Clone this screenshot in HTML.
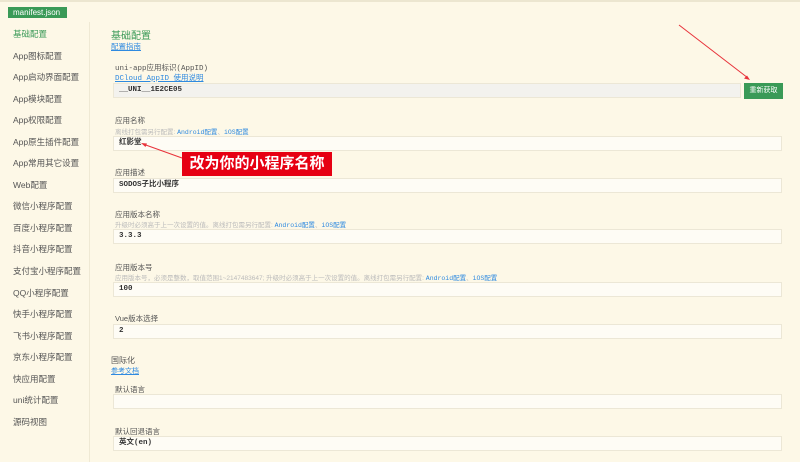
<!DOCTYPE html>
<html><head><meta charset="utf-8"><style>
*{margin:0;padding:0;box-sizing:border-box}
body{width:800px;height:462px;overflow:hidden;background:#fdf8e7;font-family:"Liberation Sans","Noto Sans CJK SC",sans-serif;position:relative;color:#333}
.a{position:absolute;white-space:nowrap}
.topline{position:absolute;left:0;top:0;width:800px;height:2px;background:#ece6d0}
.tab{left:8px;top:7px;width:59px;height:11px;background:#3a9a57;color:#fff;font-size:8px;line-height:11px;padding-left:5px}
.side{position:absolute;left:89px;top:22px;width:1px;height:440px;background:#efe9d4}
.si{left:13px;font-size:8.5px;color:#555}
.lab{left:115px;font-size:7.5px;color:#555}
.hint{left:115px;font-size:6.5px;color:#bbb}
.hint b{color:#2f8ae0;font-weight:normal;font-family:"Liberation Mono","Noto Sans CJK SC",monospace}
.inp{left:113px;width:669px;height:15px;background:#fefcf5;border:1px solid #ece7d6;font-size:7.5px;padding-left:5px;line-height:13px;font-family:"Liberation Mono","Noto Sans CJK SC",monospace;font-weight:bold;color:#333}
.lnk{color:#2f8ae0;font-size:7.5px}
</style></head><body>
<div class="topline"></div>
<div class="a tab">manifest.json</div>
<div class="side"></div>
<div class="a si" style="top:28px;color:#3a9a57">基础配置</div>
<div class="a si" style="top:50px">App图标配置</div>
<div class="a si" style="top:71px">App启动界面配置</div>
<div class="a si" style="top:93px">App模块配置</div>
<div class="a si" style="top:114px">App权限配置</div>
<div class="a si" style="top:136px">App原生插件配置</div>
<div class="a si" style="top:157px">App常用其它设置</div>
<div class="a si" style="top:179px">Web配置</div>
<div class="a si" style="top:200px">微信小程序配置</div>
<div class="a si" style="top:222px">百度小程序配置</div>
<div class="a si" style="top:243px">抖音小程序配置</div>
<div class="a si" style="top:265px">支付宝小程序配置</div>
<div class="a si" style="top:287px">QQ小程序配置</div>
<div class="a si" style="top:308px">快手小程序配置</div>
<div class="a si" style="top:330px">飞书小程序配置</div>
<div class="a si" style="top:351px">京东小程序配置</div>
<div class="a si" style="top:373px">快应用配置</div>
<div class="a si" style="top:394px">uni统计配置</div>
<div class="a si" style="top:416px">源码视图</div>

<div class="a" style="left:111px;top:27px;font-size:10px;color:#3a9a57">基础配置</div>
<div class="a lnk" style="left:111px;top:41px;text-decoration:underline">配置指南</div>

<div class="a lab" style="top:62px;font-family:'Liberation Mono','Noto Sans CJK SC',monospace">uni-app应用标识(AppID)</div>
<div class="a lnk" style="left:115px;top:72px;font-family:'Liberation Mono','Noto Sans CJK SC',monospace;text-decoration:underline">DCloud AppID 使用说明</div>
<div class="a inp" style="top:83px;width:628px;background:#f3f2ee">__UNI__1E2CE05</div>
<div class="a" style="left:744px;top:83px;width:39px;height:16px;background:#3a9a57;color:#fff;font-size:7px;line-height:16px;text-align:center">重新获取</div>

<div class="a lab" style="top:115px">应用名称</div>
<div class="a hint" style="top:126px">离线打包需另行配置: <b>Android配置</b>、<b>iOS配置</b></div>
<div class="a inp" style="top:136px">红影堂</div>

<div class="a lab" style="top:167px">应用描述</div>
<div class="a inp" style="top:178px">SODOS子比小程序</div>

<div class="a lab" style="top:209px">应用版本名称</div>
<div class="a hint" style="top:219px">升级时必须高于上一次设置的值。离线打包需另行配置: <b>Android配置</b>、<b>iOS配置</b></div>
<div class="a inp" style="top:229px">3.3.3</div>

<div class="a lab" style="top:262px">应用版本号</div>
<div class="a hint" style="top:272px">应用版本号，必须是整数，取值范围1~2147483647; 升级时必须高于上一次设置的值。离线打包需另行配置: <b>Android配置</b>、<b>iOS配置</b></div>
<div class="a inp" style="top:282px">100</div>

<div class="a lab" style="top:313px">Vue版本选择</div>
<div class="a inp" style="top:324px">2</div>

<div class="a lab" style="left:111px;top:355px;font-size:8px">国际化</div>
<div class="a lnk" style="left:111px;top:366px;font-size:7px;text-decoration:underline">参考文档</div>
<div class="a lab" style="top:384px">默认语言</div>
<div class="a inp" style="top:394px"></div>
<div class="a lab" style="top:426px">默认回退语言</div>
<div class="a inp" style="top:436px">英文(en)</div>

<div class="a" style="left:182px;top:152px;width:150px;height:24px;background:#e60012;color:#fff;font-size:15px;font-weight:bold;line-height:24px;text-align:center">改为你的小程序名称</div>
<svg class="a" style="left:0;top:0" width="800" height="462">
<line x1="182" y1="158" x2="143" y2="144" stroke="#e8323a" stroke-width="1"/>
<polygon points="141,143 147,143.5 145.5,147" fill="#e8323a"/>
<line x1="679" y1="25" x2="748" y2="78" stroke="#e8323a" stroke-width="1"/>
<polygon points="750,80 744,78.5 747,75.5" fill="#e8323a"/>
</svg>
</body></html>
